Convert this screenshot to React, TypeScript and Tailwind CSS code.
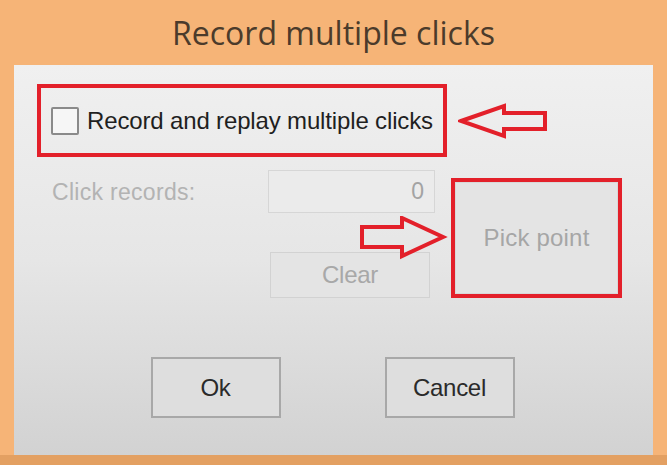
import React from "react";

const LeftArrow = () => (
  <svg width="90" height="36" viewBox="0 0 90 36" className="shrink-0">
    <polygon
      points="3,18 46,3 46,10 87,10 87,26 46,26 46,33"
      fill="none"
      stroke="#e3202a"
      strokeWidth="4"
      strokeLinejoin="miter"
    />
  </svg>
);

const RightArrow = () => (
  <svg width="88" height="44" viewBox="0 0 88 44">
    <polygon
      points="2,11 42,11 42,2 83,21 42,40 42,31 2,31"
      fill="none"
      stroke="#e3202a"
      strokeWidth="4"
      strokeLinejoin="miter"
    />
  </svg>
);

export default function App() {
  const body = { fontFamily: '"Liberation Sans", Arial, sans-serif' };

  return (
    <div className="w-[667px] h-[465px] bg-[#f6b477] flex flex-col overflow-hidden">
      {/* title bar */}
      <div
        className="h-[65px] shrink-0 flex justify-center pt-[9px] text-[32px] leading-normal text-[#4b3b2b]"
        style={{ fontFamily: '"Open Sans", "Noto Sans", sans-serif' }}
      >
        Record multiple clicks
      </div>

      {/* client area */}
      <div
        className="ml-[14px] mr-[14px] h-[390px] shrink-0 bg-gradient-to-b from-[#f0f0f0] via-[#e6e6e6] to-[#d2d2d2] flex flex-col"
        style={body}
      >
        {/* checkbox row */}
        <div className="flex items-center mt-[19px] ml-[23px]">
          <div className="w-[410px] h-[73px] border-4 border-[#e3202a] flex items-center pl-[10px] gap-[8px]">
            <div className="w-[28px] h-[28px] border-2 border-[#8a8a8a] bg-[#f6f6f6] rounded-[2px]" />
            <span className="text-[24px] text-[#1f1f1f] tracking-[-0.15px]">
              Record and replay multiple clicks
            </span>
          </div>
          <div className="ml-[11px]">
            <LeftArrow />
          </div>
        </div>

        {/* records row */}
        <div className="flex mt-[13px]">
          <div className="w-[254px] pl-[38px] pt-[5px] text-[23px] text-[#b3b3b3] tracking-[0.3px]">
            Click records:
          </div>
          <div className="relative w-[167px]">
            <div className="h-[43px] border border-[#d6d6d6] bg-[#ebebeb] flex items-center justify-end pr-[10px] text-[23px] text-[#a3a3a3]">
              0
            </div>
            <div className="mt-[39px] ml-[2px] w-[160px] h-[46px] border border-[#d2d2d2] bg-[#e4e4e4] flex items-center justify-center text-[24px] text-[#a8a8a8] tracking-[-0.3px]">
              Clear
            </div>
            <div className="absolute left-[92px] top-[46px]">
              <RightArrow />
            </div>
          </div>
          <div className="ml-[16px] mt-[8px] w-[171px] h-[120px] border-4 border-[#e3202a] flex">
            <div className="flex-1 border border-[#d8d8d8] bg-[#e4e4e4] flex items-center justify-center text-[24px] text-[#a6a6a6] tracking-[0.2px]">
              Pick point
            </div>
          </div>
        </div>

        {/* bottom buttons */}
        <div className="flex justify-center gap-[104px] mt-[59px] pr-[2px]">
          <div className="w-[130px] h-[61px] border-2 border-[#a8a8a8] bg-[#dedede] flex items-center justify-center text-[24px] text-[#2a2a2a] tracking-[-0.3px]">
            Ok
          </div>
          <div className="w-[130px] h-[61px] border-2 border-[#a8a8a8] bg-[#dedede] flex items-center justify-center text-[24px] text-[#2a2a2a] tracking-[-0.3px]">
            Cancel
          </div>
        </div>
      </div>
      <div className="flex-1 bg-[#e3a062]" />
    </div>
  );
}
